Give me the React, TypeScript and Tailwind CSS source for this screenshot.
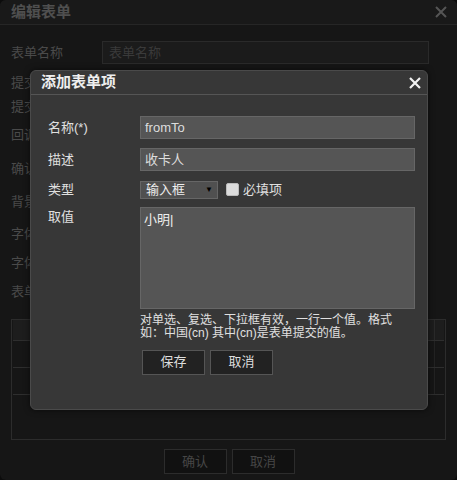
import React from "react";

const font = { fontFamily: '"Liberation Sans", "Noto Sans CJK SC", sans-serif' };

function BgRow({ label, h, input }: { label: string; h: string; input?: boolean }) {
  return (
    <div className={`flex items-center ${h}`}>
      <div className="w-[91px] text-[13px] text-[#4a4a4a]">{label}</div>
      {input && (
        <div className="flex-1 h-[23px] bg-[#1b1b1b] border border-[#2a2a2a] text-[13px] text-[#3a3a3a] flex items-center px-[6px]">
          表单名称
        </div>
      )}
    </div>
  );
}

export default function App() {
  return (
    <div className="w-[457px] h-[480px] bg-[#0c0c0c] overflow-hidden" style={font}>
      <div className="relative w-[457px] h-[480px] bg-[#161616] rounded-[6px] flex flex-col">
        {/* outer header */}
        <div className="h-[25px] flex items-center justify-between px-[11px] border-b border-[#262626] bg-[#191919] rounded-t-[6px]">
          <span className="text-[15px] font-bold text-[#4f4f4f]">编辑表单</span>
          <svg width="12" height="12" viewBox="0 0 12 12" className="mr-[-1px]">
            <path d="M1 1L11 11M11 1L1 11" stroke="#555" strokeWidth="2" />
          </svg>
        </div>
        {/* outer body */}
        <div className="flex flex-col px-[11px] pr-[28px] pt-[16px]">
          <BgRow label="表单名称" h="h-[23px]" input />
          <div className="h-[7px]" />
          <BgRow label="提交地址" h="h-[24px]" />
          <BgRow label="提交方式" h="h-[24px]" />
          <BgRow label="回调地址" h="h-[32px]" />
          <BgRow label="确认按钮" h="h-[35px]" />
          <BgRow label="背景颜色" h="h-[32px]" />
          <BgRow label="字体颜色" h="h-[31px]" />
          <BgRow label="字体大小" h="h-[27px]" />
          <BgRow label="表单项" h="h-[32px]" />
        </div>
        {/* table */}
        <div className="mx-[11px] mt-[11px] h-[121px] border border-[#2c2c2c] flex flex-col px-[1px]">
          <div className="h-[21px] border-b border-[#2e2e2e] bg-[#1d1d1d] flex">
            <div className="flex-1" />
            <div className="w-[10px] border-l border-[#2a2a2a]" />
          </div>
          <div className="h-[27px] border-b border-[#2e2e2e] flex">
            <div className="flex-1" />
            <div className="w-[10px] border-l border-[#232323]" />
          </div>
          <div className="h-[27px] border-b border-[#2e2e2e] flex">
            <div className="flex-1" />
            <div className="w-[10px] border-l border-[#232323]" />
          </div>
        </div>
        <div className="flex justify-center gap-[5px] mt-[9px] pl-[1px]">
          <div className="w-[63px] h-[25px] bg-[#111] border border-[#2c2c2c] text-[13px] text-[#464646] flex items-center justify-center">确认</div>
          <div className="w-[63px] h-[25px] bg-[#111] border border-[#2c2c2c] text-[13px] text-[#464646] flex items-center justify-center">取消</div>
        </div>

        {/* inner dialog overlay */}
        <div className="absolute left-[30px] top-[70px] w-[398px] h-[340px] bg-[#373737] border border-[#4a4a4a] rounded-[6px] shadow-[0_0_6px_rgba(0,0,0,0.6)] flex flex-col">
          <div className="h-[24px] flex items-center justify-between pl-[10px] pr-[6px] border-b border-[#555]">
            <span className="text-[15px] font-bold text-[#eeeeee]">添加表单项</span>
            <svg width="12" height="12" viewBox="0 0 12 12">
              <path d="M1 1L11 11M11 1L1 11" stroke="#f2f2f2" strokeWidth="2.2" />
            </svg>
          </div>
          <div className="flex flex-col pl-[17px] pr-[12px] pt-[21px]">
            <div className="flex items-center">
              <div className="w-[92px] text-[13px] text-[#e0e0e0]">名称(*)</div>
              <div className="flex-1 h-[23px] bg-[#555] border border-[#666] text-[13px] text-[#dddddd] flex items-center px-[4px]">fromTo</div>
            </div>
            <div className="flex items-center mt-[9px]">
              <div className="w-[92px] text-[13px] text-[#e0e0e0]">描述</div>
              <div className="flex-1 h-[23px] bg-[#555] border border-[#666] text-[13px] text-[#dddddd] flex items-center px-[4px]">收卡人</div>
            </div>
            <div className="flex items-center mt-[9px]">
              <div className="w-[92px] text-[13px] text-[#e0e0e0]">类型</div>
              <div className="w-[78px] h-[18px] bg-[#505050] border border-[#666] text-[13px] text-[#eeeeee] flex items-center justify-between pl-[5px] pr-[4px]">
                <span>输入框</span>
                <span className="text-[8px] text-black">▼</span>
              </div>
              <div className="ml-[8px] w-[13px] h-[13px] bg-[#dcdcdc] border border-[#bbb] rounded-[2px]" />
              <span className="ml-[4px] text-[13px] text-[#e0e0e0]">必填项</span>
            </div>
            <div className="flex items-start mt-[7px]">
              <div className="w-[92px] text-[13px] text-[#e0e0e0]">取值</div>
              <div className="flex-1 flex flex-col">
                <div className="h-[102px] bg-[#555] border border-[#666] text-[13px] text-[#eeeeee] px-[3px] pt-[2px]">
                  小明<span className="text-[#eee]">|</span>
                </div>
                <div className="mt-[5px] text-[12px] leading-[13px] text-[#e0e0e0]">
                  对单选、复选、下拉框有效，一行一个值。格式
                  <br />
                  如：中国(cn) 其中(cn)是表单提交的值。
                </div>
                <div className="flex gap-[5px] mt-[10px] pl-[2px]">
                  <div className="w-[63px] h-[25px] bg-[#222] border border-[#555] text-[13px] text-[#dddddd] flex items-center justify-center">保存</div>
                  <div className="w-[63px] h-[25px] bg-[#222] border border-[#555] text-[13px] text-[#dddddd] flex items-center justify-center">取消</div>
                </div>
              </div>
            </div>
          </div>
        </div>
      </div>
    </div>
  );
}
